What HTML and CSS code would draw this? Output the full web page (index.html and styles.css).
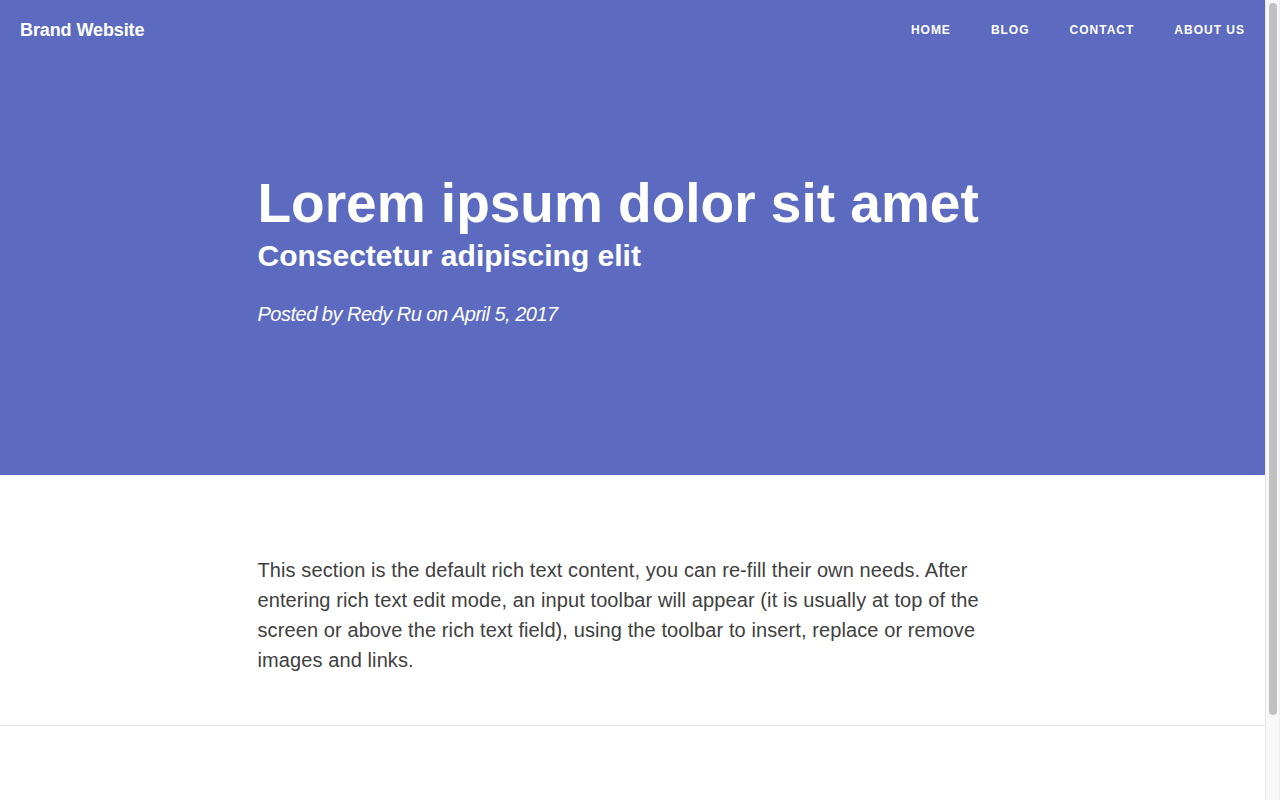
FILE: index.html
```html
<!DOCTYPE html>
<html lang="en">
<head>
<meta charset="utf-8">
<title>Brand Website</title>
<link rel="stylesheet" href="styles.css">
</head>
<body>
<div class="page">
  <header class="masthead">
    <nav class="navbar">
      <a class="brand" href="#">Brand Website</a>
      <ul class="nav-links">
        <li><a href="#">Home</a></li>
        <li><a href="#">Blog</a></li>
        <li><a href="#">Contact</a></li>
        <li><a href="#">About Us</a></li>
      </ul>
    </nav>
    <div class="container post-heading">
      <h1 class="title">Lorem ipsum dolor sit amet</h1>
      <h2 class="subheading">Consectetur adipiscing elit</h2>
      <span class="meta">Posted by Redy Ru on April 5, 2017</span>
    </div>
  </header>
  <article class="article">
    <div class="container">
      <p class="body-text">This section is the default rich text content, you can re-fill their own needs. After entering rich text edit mode, an input toolbar will appear (it is usually at top of the screen or above the rich text field), using the toolbar to insert, replace or remove images and links.</p>
    </div>
  </article>
  <hr class="divider">
  <footer class="footer"></footer>
</div>
<aside class="scrollbar" aria-hidden="true">
  <div class="scrollbar-thumb"></div>
</aside>
</body>
</html>
```

FILE: styles.css
```css
html, body {
  margin: 0;
  padding: 0;
}
body {
  display: flex;
  height: 800px;
  overflow: hidden;
  font-family: "Liberation Sans", Arial, sans-serif;
  color: #404040;
  background: #ffffff;
}
.page {
  flex: 1;
  min-width: 0;
}
.scrollbar {
  flex: none;
  display: flex;
  flex-direction: column;
  padding: 3px 2px 0 3px;
  box-sizing: border-box;
  width: 15px;
  background: #f8f8f8;
  border-left: 1px solid #e6e6e6;
  border-right: 1px solid #efefef;
}
.scrollbar-thumb {
  width: 8px;
  height: 712px;
  border-radius: 4px;
  background: #c1c1c1;
}
.masthead {
  background: #5c6bc0;
  color: #ffffff;
}
.navbar {
  display: flex;
  justify-content: space-between;
  align-items: flex-start;
  height: 60px;
}
.brand {
  padding: 20px;
  font-size: 18px;
  line-height: 20px;
  font-weight: 700;
  color: #ffffff;
  text-decoration: none;
  letter-spacing: -0.1px;
}
.nav-links {
  display: flex;
  list-style: none;
  margin: 0;
  padding: 0;
}
.nav-links a {
  display: block;
  padding: 20px;
  font-size: 12px;
  line-height: 20px;
  font-weight: 700;
  letter-spacing: 1px;
  text-transform: uppercase;
  color: #ffffff;
  text-decoration: none;
}
.container {
  max-width: 750px;
  margin: 0 auto;
}
.post-heading {
  padding: 113px 0 150px;
}
.title {
  margin: 0;
  font-size: 55px;
  line-height: 1.1;
  font-weight: 700;
}
.subheading {
  margin: 5px 0 31px;
  font-size: 30px;
  line-height: 1.1;
  font-weight: 700;
}
.meta {
  display: block;
  font-size: 20px;
  line-height: 22px;
  font-style: italic;
  font-weight: 400;
  letter-spacing: -0.5px;
}
.article {
  padding: 80px 0 50px;
}
.body-text {
  margin: 0;
  font-size: 20px;
  line-height: 30px;
  letter-spacing: 0.1px;
}
.divider {
  margin: 0;
  border: 0;
  border-top: 1px solid #e8e8e8;
}
.footer {
  height: 74px;
}
```
